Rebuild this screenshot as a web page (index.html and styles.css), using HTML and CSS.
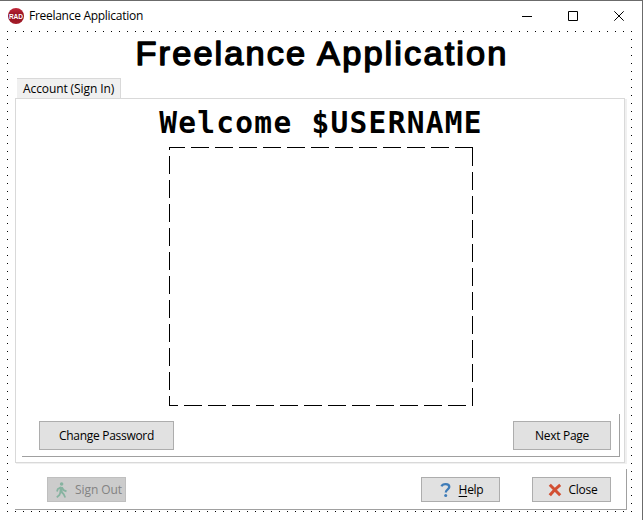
FILE: index.html
```html
<!DOCTYPE html>
<html lang="en">
<head>
<meta charset="utf-8">
<title>Freelance Application</title>
<link rel="stylesheet" href="styles.css">
</head>
<body>
<div class="window">
  <header class="titlebar">
    <svg class="logo" width="16" height="16" viewBox="0 0 16 16">
      <defs><linearGradient id="red" x2="0" y2="1"><stop stop-color="#c3283a"/><stop offset=".5" stop-color="#8e101d"/><stop offset="1" stop-color="#a71d2b"/></linearGradient></defs>
      <circle cx="8" cy="8" r="8" fill="url(#red)"/>
      <text x=".9" y="10.6" textLength="14.2" lengthAdjust="spacingAndGlyphs">RAD</text>
    </svg>
    <span class="caption">Freelance Application</span>
    <svg class="controls" width="102" height="10" viewBox="0 0 102 10">
      <path d="M0 5.5H10M46.5.5h9v9h-9z"/>
      <path d="M92.3.3l9.4 9.4M101.7.3l-9.4 9.4"/>
    </svg>
  </header>
  <main class="form">
    <h1>
      <svg width="400" height="46" viewBox="0 0 400 46"><text x="14.5" y="33.3" textLength="373" lengthAdjust="spacingAndGlyphs">Freelance Application</text></svg>
    </h1>
    <div class="tab"><span>Account (Sign In)</span></div>
    <section class="page">
      <h2>Welcome $USERNAME</h2>
      <svg class="placeholder" width="304" height="259" viewBox="0 0 304 259">
        <path d="M0 .5H304" stroke-dashoffset="2"/>
        <path d="M303.5 0V259" stroke-dashoffset="-1"/>
        <path d="M303.5 0V1"/>
        <path d="M0 258.5H304" stroke-dashoffset="9"/>
        <path d="M.5 0V259" stroke-dashoffset="15"/>
      </svg>
      <div class="actions">
        <button class="change"><span>Change Password</span></button>
        <button class="next"><span>Next Page</span></button>
      </div>
    </section>
    <footer class="bottom">
      <button class="signout" disabled>
        <svg width="14" height="16" viewBox="0 0 14 16" fill="none" stroke="#86b3a0" stroke-width="1.8"><circle cx="6.6" cy="2" r="1.8" fill="#86b3a0" stroke="none"/><path d="M6.5 10L8.6 12L10.2 15.5M5.6 10L4.4 13L1.8 15.3M6 5.3L2.8 7L2 9.6M7 5.5L8.7 8.2L11.5 9.3"/><path d="M6.3 4.8L6 10.6" stroke-width="3"/></svg>
        <span>Sign Out</span>
      </button>
      <button class="help">
        <svg width="12" height="16" viewBox="0 0 12 16"><path d="M1.5 4.4Q2.3 2.2 5.8 2.2Q9.3 2.2 9.3 5C9.3 7.3 5.8 7.4 5.8 10.4" fill="none" stroke="#3f7cb8" stroke-width="2.3"/><circle cx="5.7" cy="13.4" r="1.5" fill="#3f7cb8"/></svg>
        <span><u>H</u>elp</span>
      </button>
      <button class="close">
        <svg width="14" height="14" viewBox="0 0 14 14"><path d="M1.8 1.8Q6 6 12.2 12.2M12.2 1.8Q7 6 1.8 12.2" fill="none" stroke="#d24f32" stroke-width="3"/></svg>
        <span>Close</span>
      </button>
    </footer>
  </main>
</div>
</body>
</html>
```
FILE: styles.css
```css
* { box-sizing: border-box; }
body { margin: 0; background: #fff; color: #000; font: 12px/16px "Open Sans", sans-serif; }
.window { width: 643px; height: 520px; border-top: 1px solid #6b6b6b; border-right: 1px solid #6b6b6b; overflow: hidden; }
.titlebar { height: 30px; display: flex; align-items: center; padding: 0 18px 1px 8px; }
.logo text { font: bold 7px "Liberation Sans", sans-serif; fill: #fff; }
.caption { margin-left: 5px; letter-spacing: -.28px; }
.controls { margin-left: auto; fill: none; stroke: #000; }
.form {
  width: 625px; height: 481px; margin-left: 7px; padding: 0 5px 0 8px;
  background:
    linear-gradient(90deg, #000 1px, transparent 1px) 0 0 / 8px 1px repeat-x,
    linear-gradient(90deg, #000 1px, transparent 1px) 0 100% / 8px 1px repeat-x,
    linear-gradient(#000 1px, transparent 1px) 0 0 / 1px 8px repeat-y,
    linear-gradient(#000 1px, transparent 1px) 100% 0 / 1px 8px repeat-y;
}
h1 { margin: 0; height: 47px; display: flex; justify-content: center; }
h1 svg { margin-top: 1px; flex: none; }
h1 text { font: 32.5px "Liberation Sans", sans-serif; letter-spacing: 2px; stroke: #000; stroke-width: 1.4px; stroke-linejoin: round; }
.tab { width: 104px; height: 20px; margin-left: 2px; padding: 2px 0 0 6px; background: #f0f0f0; border-top: 1px solid #d9d9d9; border-right: 1px solid #d9d9d9; white-space: nowrap; letter-spacing: -.1px; }
.page { width: 610px; height: 365px; border: 1px solid #d9d9d9; box-shadow: 1px 1px 0 #f0f0f0, 2px 1px 0 #f0f0f0; display: flex; flex-direction: column; align-items: center; padding: 8px 4px 5px 6px; }
h2 { margin: 0; height: 40px; font: bold 29.5px/32px "DejaVu Sans Mono", monospace; letter-spacing: 1.28px; white-space: nowrap; }
.placeholder { flex: none; fill: none; stroke: #000; stroke-dasharray: 18 6; margin-right: 1px; }
.actions { width: 598px; height: 43px; margin-top: 8px; border: solid #a0a0a0; border-width: 0 1px 1px 0; display: flex; justify-content: space-between; align-items: flex-start; padding: 7px 8px 0 17px; }
button { margin: 0; padding: 0; background: #e1e1e1; border: 1px solid #adadad; color: #000; font: inherit; letter-spacing: -.3px; display: flex; align-items: center; justify-content: center; white-space: nowrap; }
.change { width: 135px; height: 29px; }
.next { width: 98px; height: 29px; }
.bottom { width: 612px; height: 41px; margin-top: 6px; border: solid #a0a0a0; border-width: 0 1px 1px 0; display: flex; align-items: flex-start; padding: 8px 15px 0 32px; }
.bottom button { width: 79px; height: 25px; padding-left: 2px; }
.bottom .signout { background: #ccc; border-color: #bfbfbf; color: #838383; gap: 6px; padding-left: 4px; letter-spacing: -.1px; }
.help { margin-left: auto; gap: 7px; }
.close { margin-left: 32px; gap: 7px; }
u { text-underline-offset: 2px; }
```
